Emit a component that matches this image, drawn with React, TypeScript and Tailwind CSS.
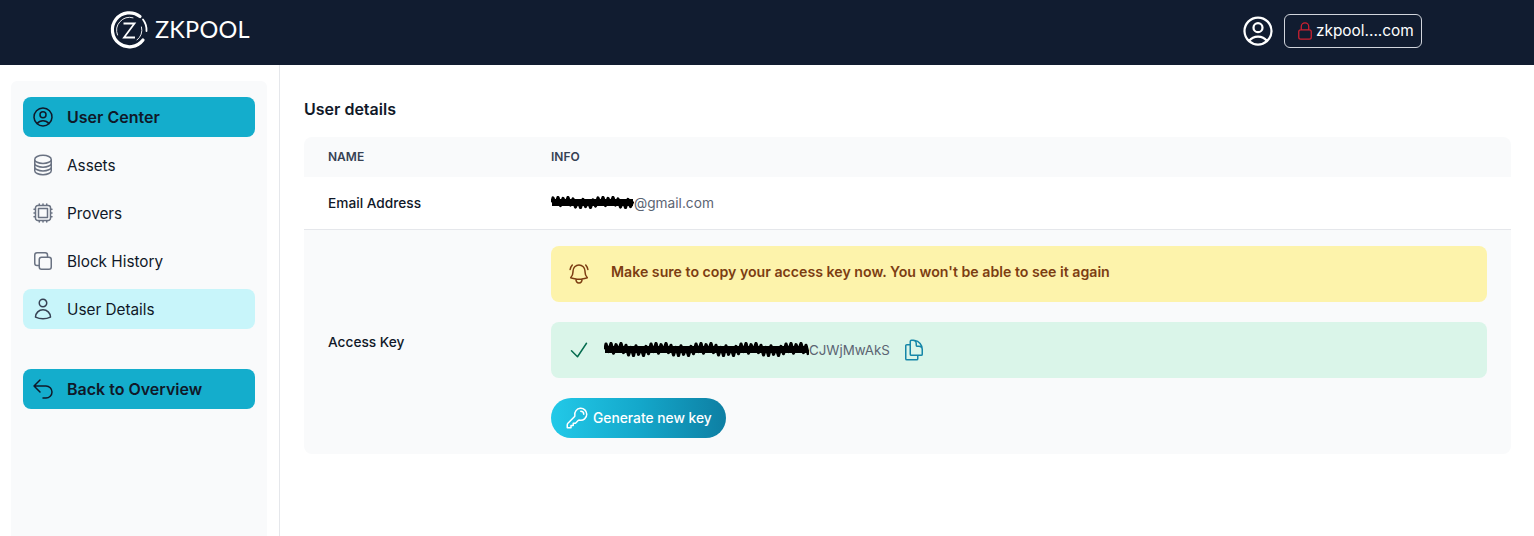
import {
  HiOutlineArrowUturnLeft,
  HiOutlineBellAlert,
  HiOutlineCheck,
  HiOutlineCircleStack,
  HiOutlineCpuChip,
  HiOutlineDocumentDuplicate,
  HiOutlineKey,
  HiOutlineLockClosed,
  HiOutlineSquare2Stack,
  HiOutlineUser,
  HiOutlineUserCircle,
} from "react-icons/hi2";
import type { IconType } from "react-icons";

interface NavItem {
  label: string;
  icon: IconType;
  className: string;
  iconClass: string;
}

const navItems: NavItem[] = [
  {
    label: "User Center",
    icon: HiOutlineUserCircle,
    className: "bg-[#14adcc] text-base font-semibold",
    iconClass: "text-gray-900",
  },
  { label: "Assets", icon: HiOutlineCircleStack, className: "text-[15.3px] [&>span]:mt-[2px]", iconClass: "text-gray-500" },
  { label: "Provers", icon: HiOutlineCpuChip, className: "text-[15.3px] [&>span]:mt-[2px]", iconClass: "text-gray-500" },
  { label: "Block History", icon: HiOutlineSquare2Stack, className: "text-[15.3px] [&>span]:mt-[2px]", iconClass: "text-gray-500" },
  { label: "User Details", icon: HiOutlineUser, className: "bg-[#c8f5fa] text-[15.3px] [&>span]:mt-[2px]", iconClass: "text-gray-700" },
];

function ZkLogo() {
  return (
    <div className="mb-[2px] flex items-center gap-[6px] text-white">
      <svg width="40" height="40" viewBox="0 0 40 40" fill="none" stroke="currentColor">
        <path d="M31 6.5A17 17 0 1 0 34 30" strokeWidth="3.2" strokeLinecap="round" />
        <path d="M37.5 21A17.5 17.5 0 0 0 34 9.5" strokeWidth="1.8" strokeLinecap="round" />
        <path d="M8.5 25A13 13 0 0 1 24 7.8" strokeWidth="0.9" strokeLinecap="round" />
        <path d="M32.5 17A13 13 0 0 1 28 30" strokeWidth="0.9" strokeLinecap="round" />
        <path d="M14.5 13.5H25.5L15 27.5H26" strokeWidth="1.8" />
      </svg>
      <span className="font-['Lato',sans-serif] text-[23.5px] leading-none font-normal tracking-[0.2px]">ZKPOOL</span>
    </div>
  );
}

// black scribble over the redacted part of a value
function Scribble({ width, height }: { width: number; height: number }) {
  const amps = [0.9, 0.35, 1, 0.6, 0.8, 0.25, 1, 0.5, 0.7];
  let d = `M1 ${height / 2}`;
  for (let x = 2, i = 0; x < width; x += 2.5, i++) {
    const dir = i % 2 === 0 ? -1 : 1;
    const y = height / 2 + (dir * amps[i % amps.length] * (height - 3)) / 2;
    d += ` L${x} ${y}`;
  }
  return (
    <svg width={width} height={height} viewBox={`0 0 ${width} ${height}`} fill="none" className="shrink-0">
      <path d={d} stroke="#000" strokeWidth="3.2" strokeLinejoin="round" />
      <path d={`M1 ${height / 2} H${width - 1}`} stroke="#000" strokeWidth="7" />
    </svg>
  );
}

function App() {
  return (
    <div className="flex h-[536px] flex-col overflow-hidden bg-white font-['Inter',sans-serif]">
      <header className="flex h-[65px] shrink-0 items-center justify-between bg-[#111c30] pr-[112px] pb-[3px] pl-[109px]">
        <ZkLogo />
        <div className="flex items-center gap-2">
          <HiOutlineUserCircle className="h-9 w-9 text-white" />
          <div className="flex h-[34px] w-[138px] items-center gap-[1px] rounded-md border border-gray-300 pl-[10px] text-white">
            <HiOutlineLockClosed className="h-[20px] w-[20px] text-[#d02030]" />
            <span className="text-[15.4px]">zkpool....com</span>
          </div>
        </div>
      </header>

      <div className="flex min-h-0 flex-1">
        <aside className="flex w-[280px] shrink-0 border-r border-gray-200 pt-4 pl-[11px]">
          <nav className="flex w-[256px] flex-col rounded-t-md bg-gray-50 px-3 pt-4">
            <ul className="flex flex-col gap-2">
              {navItems.map((item) => (
                <li
                  key={item.label}
                  className={`flex h-10 items-center gap-3 rounded-lg px-2 text-gray-900 ${item.className}`}
                >
                  <item.icon className={`h-6 w-6 shrink-0 ${item.iconClass}`} />
                  <span>{item.label}</span>
                </li>
              ))}
            </ul>
            <div className="mt-10 flex h-10 items-center gap-3 rounded-lg bg-[#14adcc] px-2 text-base font-semibold text-gray-900">
              <HiOutlineArrowUturnLeft className="h-6 w-6 shrink-0" />
              <span>Back to Overview</span>
            </div>
          </nav>
        </aside>

        <main className="flex-1 pt-[34px] pr-[23px] pl-[24px]">
          <h2 className="text-base leading-[21px] font-semibold text-gray-900">User details</h2>

          <div className="mt-[17px] text-[13.7px]">
            <div className="grid h-10 grid-cols-[223px_1fr] items-center rounded-t-lg bg-gray-50 px-6 text-xs font-semibold text-gray-700 uppercase">
              <span>Name</span>
              <span>Info</span>
            </div>
            <div className="grid h-[53px] grid-cols-[223px_1fr] items-center border-b border-gray-200 px-6">
              <span className="font-medium text-gray-900">Email Address</span>
              <span className="flex items-center text-[#5b6472]">
                <Scribble width={83} height={13} />
                @gmail.com
              </span>
            </div>
            <div className="grid grid-cols-[223px_1fr] items-center rounded-b-lg bg-gray-50 px-6 py-4">
              <span className="font-medium text-gray-900">Access Key</span>
              <div className="flex flex-col items-start">
                <div className="flex h-14 w-full items-center gap-[20px] rounded-lg bg-[#fdf3ab] px-4 text-[14.17px] font-semibold text-[#7c3d12]">
                  <HiOutlineBellAlert className="h-6 w-6 shrink-0" />
                  <span className="mb-1">Make sure to copy your access key now. You won't be able to see it again</span>
                </div>
                <div className="mt-5 flex h-14 w-full items-center rounded-lg bg-[#daf5e9] pl-4 text-[13.35px] text-[#5b6472]">
                  <HiOutlineCheck className="h-[24px] w-[24px] shrink-0 text-[#046c4e]" />
                  <span className="ml-[13px] flex items-center">
                    <Scribble width={205} height={15} />
                    CJWjMwAkS
                  </span>
                  <HiOutlineDocumentDuplicate className="ml-[12px] h-6 w-6 shrink-0 text-[#1586a8]" />
                </div>
                <button className="mt-5 flex h-10 w-[175px] items-center gap-[4px] rounded-full bg-gradient-to-r from-[#22c9e8] via-[#14a8cb] to-[#0e7fa3] pl-[14px] font-medium text-white">
                  <HiOutlineKey className="h-6 w-6 shrink-0" />
                  <span className="text-[13.8px]">Generate new key</span>
                </button>
              </div>
            </div>
          </div>
        </main>
      </div>
    </div>
  );
}

export default App;
